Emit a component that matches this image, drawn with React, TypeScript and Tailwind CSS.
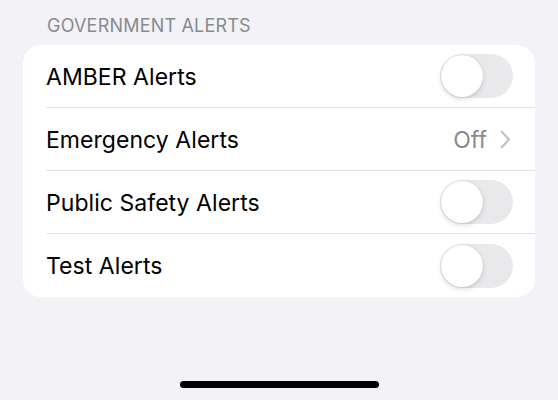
import React from "react";

function Toggle() {
  return (
    <div className="w-[73px] h-[44px] rounded-full bg-[#e9e9eb] p-[1px] flex items-center">
      <div className="w-[42px] h-[42px] rounded-full bg-white shadow-[0_2px_5px_rgba(0,0,0,0.15),0_0_1px_rgba(0,0,0,0.12)]" />
    </div>
  );
}

function Row({ label, right, last }: { label: string; right: React.ReactNode; last?: boolean }) {
  return (
    <div className="flex h-[63px] pl-[23px]">
      <div className={`flex flex-1 items-center justify-between pr-[22px] ${last ? "" : "border-b border-[#e3e3e6]"}`}>
        <span className="text-[23px] text-black pt-[2px] tracking-[0.05px]">{label}</span>
        {right}
      </div>
    </div>
  );
}

export default function App() {
  return (
    <div
      className="w-[558px] h-[400px] bg-[#f2f2f7] flex flex-col"
      style={{ fontFamily: "Inter, 'Noto Sans', sans-serif" }}
    >
      <div className="pl-[47px] pt-[15px] h-[45px] text-[18px] text-[#8a8a8e] tracking-[0.2px] leading-[22px]">
        GOVERNMENT ALERTS
      </div>
      <div className="mx-[23px] bg-white rounded-[18px] overflow-hidden">
        <Row label="AMBER Alerts" right={<Toggle />} />
        <Row
          label="Emergency Alerts"
          right={
            <div className="flex items-center gap-[13px] pr-[2px]">
              <span className="text-[23px] text-[#8a8a8e] pt-[2px]">Off</span>
              <svg width="11" height="19" viewBox="0 0 11 19" fill="none">
                <path d="M1.8 1.8L9 9.5L1.8 17.2" stroke="#c4c4c7" strokeWidth="2.3" strokeLinecap="round" strokeLinejoin="round" />
              </svg>
            </div>
          }
        />
        <Row label="Public Safety Alerts" right={<Toggle />} />
        <Row label="Test Alerts" right={<Toggle />} last />
      </div>
      <div className="flex-1" />
      <div className="flex justify-center pb-[12px]">
        <div className="w-[199px] h-[7px] rounded-full bg-black" />
      </div>
    </div>
  );
}
